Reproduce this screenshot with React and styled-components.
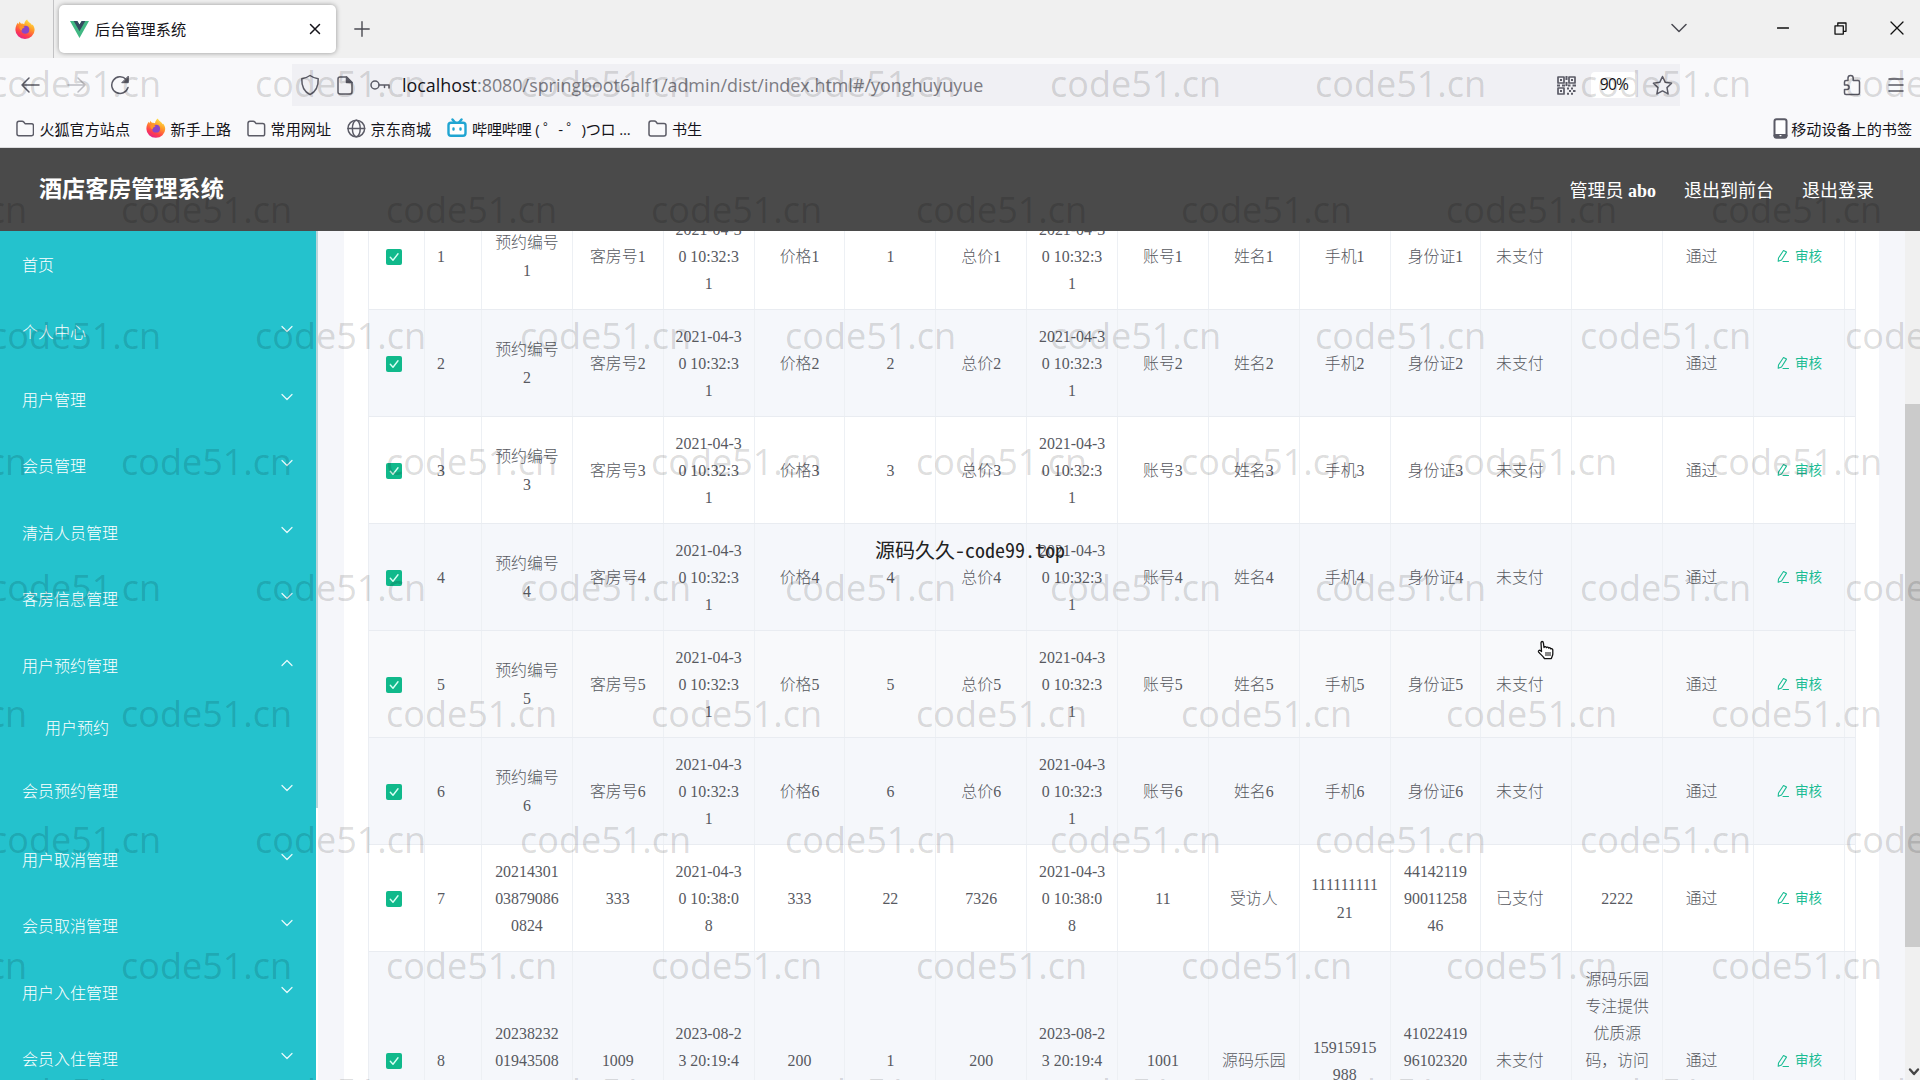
import React from "react";
import styled, { createGlobalStyle } from "styled-components";

const UI = `"Open Sans", "Noto Sans CJK SC", sans-serif`;
const BODY = `"Liberation Serif", "Noto Sans CJK SC", serif`;

const Global = createGlobalStyle`
  * { box-sizing: border-box; }
  body { margin: 0; overflow: hidden; background: #fff; }
`;

const Screen = styled.div`
  position: relative;
  width: 1920px;
  height: 1080px;
  display: flex;
  flex-direction: column;
  overflow: hidden;
  font-family: ${UI};
  color: #15141a;
`;

/* ---------- browser chrome ---------- */
const TabStrip = styled.div`
  height: 58px;
  flex: none;
  display: flex;
  align-items: flex-start;
  background: #f0f0f0;
`;
const PinnedTab = styled.div`
  width: 54px;
  height: 58px;
  padding-left: 15px;
  display: flex;
  align-items: center;
  border-right: 1px solid #c2c2c4;
`;
const Tab = styled.div`
  width: 277px;
  height: 48px;
  margin: 5px 0 0 5px;
  padding: 0 15px 0 11px;
  display: flex;
  align-items: center;
  border-radius: 5px;
  background: #fff;
  box-shadow: 0 0 5px rgba(0, 0, 0, 0.38);
`;
const TabTitle = styled.span`
  flex: 1;
  margin-left: 6px;
  padding-bottom: 2px;
  font-size: 15.2px;
`;
const NewTab = styled.div`
  height: 58px;
  margin-left: 18px;
  display: flex;
  align-items: center;
`;
const WindowControls = styled.div`
  height: 56px;
  margin-left: auto;
  padding-right: 16px;
  display: flex;
  align-items: center;
`;
const Control = styled.div`
  display: flex;
  margin-left: ${(p) => p.$gap || 0}px;
`;

const NavBar = styled.div`
  height: 50px;
  flex: none;
  display: flex;
  align-items: center;
  padding: 4px 16px 0 20px;
  background: #f9f9fb;
`;
const NavButtons = styled.div`
  width: 272px;
  display: flex;
  align-items: center;
`;
const UrlBar = styled.div`
  width: 1388px;
  height: 42px;
  padding: 0 7px 0 8px;
  display: flex;
  align-items: center;
  background: #f0f0f4;
`;
const Url = styled.span`
  flex: 1;
  margin-left: 12px;
  padding-bottom: 1px;
  font-size: 17.9px;
  white-space: nowrap;
  color: #7c7c83;
  b { font-weight: 400; color: #15141a; }
`;
const ZoomBadge = styled.span`
  width: 46px;
  margin: 0 15px 0 15px;
  height: 26px;
  line-height: 24px;
  text-align: center;
  border-radius: 4px;
  background: #fff;
  font-size: 15.6px;
  letter-spacing: -0.7px;
`;
const NavRight = styled.div`
  margin-left: auto;
  display: flex;
  align-items: center;
  gap: 27px;
`;

const Bookmarks = styled.div`
  height: 40px;
  flex: none;
  display: flex;
  align-items: center;
  gap: 16px;
  padding: 1px 8px 0 16px;
  background: #f9f9fb;
  border-bottom: 1px solid #dcdcde;
`;
const Bookmark = styled.div`
  display: flex;
  align-items: center;
  gap: ${(p) => (p.$end ? 3 : 5)}px;
  margin-left: ${(p) => (p.$end ? "auto" : "0")};
  width: ${(p) => (p.$w ? p.$w + "px" : "auto")};
  font-size: 15.1px;
  letter-spacing: ${(p) => p.$track || 0}px;
  white-space: nowrap;
`;

/* ---------- application ---------- */
const Header = styled.header`
  height: 83px;
  flex: none;
  padding: 0 46px 2px 39px;
  display: flex;
  align-items: center;
  background: #4a4a4a;
  color: #fff;
  font-family: ${BODY};
`;
const Title = styled.h1`
  margin: 0 auto 3px 0;
  font-size: 23.1px;
  font-weight: 700;
`;
const HeaderLink = styled.span`
  margin-left: 28px;
  font-size: 18px;
  b { font-weight: 700; }
`;
const Body = styled.div`
  flex: 1;
  min-height: 0;
  display: flex;
  overflow: hidden;
  font-family: ${BODY};
`;
const Sidebar = styled.nav`
  width: 316px;
  flex: none;
  background: #24c2cd;
  color: #fff;
`;
const MenuItem = styled.div`
  height: ${(p) => p.$h || 66.5}px;
  padding: 0 23px 0 ${(p) => (p.$sub ? 45 : 22)}px;
  display: flex;
  align-items: center;
  justify-content: space-between;
  font-size: 16px;
  font-weight: 300;
  svg { margin-top: -4px; }
`;
const SideScroll = styled.div`
  width: 2px;
  height: 577px;
  flex: none;
  background: #b9d5da;
`;
const Main = styled.main`
  flex: 1;
  padding: 0 26px 0 26px;
  background: #f5f6fa;
  overflow: hidden;
`;
const Card = styled.section`
  display: flow-root;
  height: 100%;
  padding: 0 23px 0 24px;
  background: #fff;
`;
const Table = styled.div`
  margin-top: -28px;
  border-left: 1px solid #ebeef3;
  border-right: 1px solid #ebeef3;
  color: #57595f;
  font-size: 15.9px;
  line-height: 27.2px;
`;
const Row = styled.div`
  height: ${(p) => p.$h || 107}px;
  display: grid;
  grid-template-columns: 56px 57px repeat(15, 90.86px) 1fr;
  background: ${(p) => p.$bg};
  border-bottom: 1px solid #e9ecf1;
`;
const Cell = styled.div`
  display: flex;
  align-items: center;
  justify-content: center;
  padding-top: 1px;
  padding-right: ${(p) => p.$shift || 0}px;
  border-right: 1px solid #edf0f4;
  text-align: center;
  white-space: pre;
  font-weight: 300;
  &:last-child { border-right: 0; }
`;
const Check = styled.span`
  width: 16px;
  height: 16px;
  display: flex;
  border-radius: 2px;
  background: #10b98b;
`;
const Audit = styled.span`
  display: flex;
  align-items: center;
  gap: 6px;
  color: #1abc93;
  font-size: 13.5px;
  font-weight: 400;
`;
const PageScroll = styled.div`
  width: 15px;
  flex: none;
  display: flex;
  flex-direction: column;
  justify-content: space-between;
  align-items: flex-end;
  padding-top: 173px;
  background: #f0f0f0;
`;
const Thumb = styled.div`
  width: 15px;
  height: 543px;
  background: #cbcbcb;
`;
const ScrollDown = styled.div`
  display: flex;
  padding-bottom: 3px;
`;

/* ---------- overlays ---------- */
const Watermarks = styled.div`
  position: absolute;
  inset: 0;
  overflow: hidden;
  pointer-events: none;
  color: rgba(0, 0, 0, 0.14);
`;
const MarkRow = styled.div`
  height: 126px;
  display: flex;
  margin-left: ${(p) => p.$x}px;
  font: 36px/126px "Open Sans", sans-serif;
  &:first-child { margin-top: 21px; }
  span { width: 265px; flex: none; }
`;
const CenterMark = styled.div`
  position: absolute;
  left: 875px;
  top: 535px;
  font: 20px/29px "Noto Sans Mono CJK SC", "Noto Sans CJK SC", monospace;
  white-space: pre;
  color: #222;
`;
const Pointer = styled.svg`
  position: absolute;
  left: 1537px;
  top: 640px;
`;

/* ---------- icons ---------- */
const Ico = ({ w = 20, h = w, vb = `0 0 ${w} ${h}`, c = "#5b5b66", s = 1.5, children }) => (
  <svg width={w} height={h} viewBox={vb} fill="none" stroke={c} strokeWidth={s} strokeLinecap="round" strokeLinejoin="round">
    {children}
  </svg>
);
const Firefox = ({ id }) => (
  <svg width="20" height="20" viewBox="0 0 20 20">
    <defs>
      <linearGradient id={id} x1="0.8" y1="0" x2="0.3" y2="1">
        <stop offset="0" stopColor="#fff04a" />
        <stop offset="0.4" stopColor="#ff9a28" />
        <stop offset="0.75" stopColor="#ff3f4d" />
        <stop offset="1" stopColor="#e3208a" />
      </linearGradient>
    </defs>
    <path fill={`url(#${id})`} d="M12.2.4c.2 1.5 1.4 2.300 2.900 3.500.9.7 1.500 1.500 1.900 2.300l.6-.6C18.800 7.200 19.600 9 19.600 11a9.600 8.900 0 0 1-19.200 0C.4 8 1.300 5.600 2.800 3.700l.5 1.500L4.700 2.500c.2 1 .7 1.700 1.500 2.200 1.300-.3 2.300 0 3 .5C9.500 3 10.500 1.300 12.200.4z" />
    <circle cx="10.300" cy="10.700" r="4" fill="#8b45c8" />
    <path fill="#ff9428" d="M4.500 7.200c2-.8 4-.3 5.300.7l-1.600 1.300c-1 .4-1.500 1.200-1 2.200-2.200-.2-3.200-2-2.700-4.200z" />
  </svg>
);
const Vue = () => (
  <svg width="19" height="17" viewBox="0 0 19 17">
    <path fill="#41b883" d="M0 0h7.300l2.200 3.500L11.700 0H19L9.500 17z" />
    <path fill="#35495e" d="M3.700 0h3.600l2.200 3.500L11.700 0h3.600L9.500 10.200z" />
  </svg>
);
const Folder = () => (
  <Ico w={19} h={17}>
    <path d="M1 3.500C1 2 1.700 1 3 1h3.300c.8 0 1.300.3 1.700.8L9.300 3.500H16c1.300 0 2 .8 2 2V14c0 1.300-.7 2-2 2H3c-1.300 0-2-.7-2-2z" />
  </Ico>
);
const Globe = () => (
  <Ico w={19}>
    <circle cx="9.500" cy="9.500" r="8.500" />
    <ellipse cx="9.500" cy="9.500" rx="4" ry="8.500" />
    <path d="M1 9.500h17" />
  </Ico>
);
const Bili = () => (
  <Ico w={20} h={20} c="#20a5d2" s={2.4}>
    <path d="M5.500 1.500L8 4.500M14.500 1.500L12 4.500" />
    <rect x="1.500" y="4.800" width="17" height="13" rx="2.500" fill="#fff" />
    <path d="M6.500 10.500v1M13.500 10.500v1" />
  </Ico>
);
const Phone = () => (
  <Ico w={15} h={21} s={2}>
    <rect x="1.500" y="1.200" width="12" height="18.600" rx="2" fill="#fff" />
    <path d="M2 17.600h11" strokeWidth="3" />
    <path d="M7 17.600h1" stroke="#fff" strokeWidth="1.200" />
  </Ico>
);
const Qr = () => (
  <Ico w={19} s={1.7}>
    <rect x="1" y="1" width="6" height="6" /><rect x="12" y="1" width="6" height="6" /><rect x="1" y="12" width="6" height="6" />
    <path strokeWidth="2" strokeLinecap="butt" d="M3 4h2M14 4h2M3 15h2M9.500 0v4M9.500 6v4M0 9.500h3M5 9.500h3M11 9.500h2.500M15.500 9.500H19M10 12.500h2M14 12.500h2M12 15h2M16 15h2.500M10 17.700h2M14 17.700h2" />
  </Ico>
);
const Chevron = ({ up }) => (
  <Ico w={12} h={8} c="#e9fbfc" s={1.2}>
    <path d={up ? "M1 6.500l5-5 5 5" : "M1 1.500l5 5 5-5"} />
  </Ico>
);

/* ---------- data ---------- */
const menu = [
  { t: "首页", h: 65, leaf: true },
  { t: "个人中心", h: 70 },
  { t: "用户管理", h: 66 },
  { t: "会员管理" },
  { t: "清洁人员管理" },
  { t: "客房信息管理" },
  { t: "用户预约管理", h: 67, open: true },
  { t: "用户预约", sub: true, leaf: true, h: 56 },
  { t: "会员预约管理", h: 71 },
  { t: "用户取消管理" },
  { t: "会员取消管理" },
  { t: "用户入住管理" },
  { t: "会员入住管理" },
];

const stamp = "2021-04-3\n0 10:32:3\n1";
const shades = ["#ffffff", "#f5f7fb", "#ffffff", "#f5f7fb", "#f8f9fb", "#f5f7fb"];
const rows = [
  ...shades.map((bg, i) => {
    const n = i + 1;
    return {
      bg,
      cells: [`${n}`, `预约编号\n${n}`, `客房号${n}`, stamp, `价格${n}`, `${n}`, `总价${n}`, stamp, `账号${n}`, `姓名${n}`, `手机${n}`, `身份证${n}`, "未支付", "", "通过"],
    };
  }),
  {
    bg: "#ffffff",
    cells: ["7", "20214301\n03879086\n0824", "333", "2021-04-3\n0 10:38:0\n8", "333", "22", "7326", "2021-04-3\n0 10:38:0\n8", "11", "受访人", "111111111\n21", "44142119\n90011258\n46", "已支付", "2222", "通过"],
  },
  {
    bg: "#f5f7fb",
    h: 218,
    cells: ["8", "20238232\n01943508\n", "1009", "2023-08-2\n3 20:19:4\n", "200", "1", "200", "2023-08-2\n3 20:19:4\n", "1001", "源码乐园", "15915915\n988", "41022419\n96102320\n", "未支付", "源码乐园\n专注提供\n优质源\n码，访问\n地址：\n\n", "通过"],
  },
];
/* trailing padding of the cells whose text sits left of the middle */
const shifts = { 0: 24, 12: 13, 14: 13 };
/* a cell that continues below the fold keeps its last line as a blank */
const lines = (t) => (t.endsWith("\n") ? t + " " : t);

export default function App() {
  return (
    <Screen>
      <Global />
      <TabStrip>
        <PinnedTab><Firefox id="ffPinned" /></PinnedTab>
        <Tab>
          <Vue />
          <TabTitle>后台管理系统</TabTitle>
          <Ico w={12} c="#15141a"><path d="M1.500 1.500l9 9M10.500 1.500l-9 9" /></Ico>
        </Tab>
        <NewTab><Ico w={16} c="#4a4a52" s={1.4}><path d="M8 .8v14.400M.8 8h14.400" /></Ico></NewTab>
        <WindowControls>
          <Control><Ico w={16} h={10} c="#4a4a52"><path d="M1 1.500l7 7 7-7" /></Ico></Control>
          <Control $gap={90}><Ico w={12} h={4} c="#111" s={1.3}><path d="M.5 2h11" /></Ico></Control>
          <Control $gap={45}>
            <Ico w={13} c="#111" s={1.3}>
              <rect x="1" y="3.800" width="8.300" height="8.300" />
              <path d="M3.800 3.500V1H12v8.300H9.500" />
            </Ico>
          </Control>
          <Control $gap={43}><Ico w={14} c="#111" s={1.3}><path d="M1 1l12 12M13 1L1 13" /></Ico></Control>
        </WindowControls>
      </TabStrip>

      <NavBar>
        <NavButtons>
          <Ico w={20} h={18}><path d="M19 9H2M9 2L2 9l7 7" /></Ico>
          <Control $gap={27}><Ico w={20} h={18} c="#bdbdc3"><path d="M1 9h17M11 2l7 7-7 7" /></Ico></Control>
          <Control $gap={23}>
            <Ico w={20}>
              <path d="M18 12.500A8.300 8.300 0 1 1 16 4.300" />
              <path d="M18.300 1.500v6.200h-6.200z" fill="#5b5b66" strokeWidth="1" />
            </Ico>
          </Control>
        </NavButtons>
        <UrlBar>
          <Ico w={20} h={22}><path d="M10 1.500c2.500 1.800 5 2.700 8.200 3.200.3 7-2.200 12.800-8.200 16-6-3.200-8.500-9-8.200-16C5 4.200 7.500 3.300 10 1.500z" /></Ico>
          <Control $gap={17}>
            <Ico w={16} h={19}>
              <path d="M3 1h6.500L15 6.500V16c0 1.300-.7 2-2 2H3c-1.300 0-2-.7-2-2V3c0-1.300.7-2 2-2z" />
              <path d="M9.500 1v5.500H15z" fill="#5b5b66" />
            </Ico>
          </Control>
          <Control $gap={17}>
            <Ico w={20} h={12}><circle cx="5" cy="6" r="4" /><path d="M9 6h10v3M14.500 6v2.500" /></Ico>
          </Control>
          <Url><b>localhost</b>:8080/springboot6alf1/admin/dist/index.html#/yonghuyuyue</Url>
          <Qr />
          <ZoomBadge>90%</ZoomBadge>
          <Ico w={21} h={21}><path d="M10.500 1.500l2.800 5.800 6.300.9-4.600 4.400 1.100 6.300-5.600-3-5.600 3L6 12.600 1.400 8.200l6.300-.9z" /></Ico>
        </UrlBar>
        <NavRight>
          <Ico w={19} h={22}>
            <path d="M6 6.500V4a2.600 2.600 0 0 1 5.200 0v2.500H16c1 0 1.500.5 1.500 1.500v11c0 1-.5 1.500-1.500 1.500H4c-1 0-1.500-.5-1.500-1.500v-3.500h2.300a2.300 2.300 0 0 0 0-4.600H2.500V8c0-1 .5-1.500 1.500-1.500z" />
          </Ico>
          <Ico w={16} h={14}><path d="M1 1h14M1 7h14M1 13h14" /></Ico>
        </NavRight>
      </NavBar>

      <Bookmarks>
        <Bookmark $w={114}><Folder />火狐官方站点</Bookmark>
        <Bookmark $w={85}><Firefox id="ffMark" />新手上路</Bookmark>
        <Bookmark $w={84}><Folder />常用网址</Bookmark>
        <Bookmark $w={84}><Globe />京东商城</Bookmark>
        <Bookmark $w={185} $track={-0.2}><Bili />哔哩哔哩 ( ゜- ゜)つロ ...</Bookmark>
        <Bookmark><Folder />书生</Bookmark>
        <Bookmark $end><Phone />移动设备上的书签</Bookmark>
      </Bookmarks>

      <Header>
        <Title>酒店客房管理系统</Title>
        <HeaderLink>管理员 <b>abo</b></HeaderLink>
        <HeaderLink>退出到前台</HeaderLink>
        <HeaderLink>退出登录</HeaderLink>
      </Header>

      <Body>
        <Sidebar>
          {menu.map((m) => (
            <MenuItem key={m.t} $h={m.h} $sub={m.sub}>
              {m.t}
              {!m.leaf && <Chevron up={m.open} />}
            </MenuItem>
          ))}
        </Sidebar>
        <SideScroll />
        <Main>
          <Card>
            <Table>
              {rows.map((r, i) => (
                <Row key={i} $bg={r.bg} $h={r.h}>
                  <Cell $shift={5}>
                    <Check><Ico w={16} c="#d9fff4" s={1.4}><path d="M4.300 8.300l2.700 3 5-6.500" /></Ico></Check>
                  </Cell>
                  {r.cells.map((c, j) => (
                    <Cell key={j} $shift={shifts[j]}>{lines(c)}</Cell>
                  ))}
                  <Cell>
                    <Audit>
                      <Ico w={13} h={14} c="#1abc93" s={1.1}><path d="M7.500 1.500l3 1.600L5.500 11l-3.300 1.300.3-3.300zM7 12.500h5.500" /></Ico>
                      审核
                    </Audit>
                  </Cell>
                  <Cell />
                </Row>
              ))}
            </Table>
          </Card>
        </Main>
        <PageScroll>
          <Thumb />
          <ScrollDown><Ico w={12} h={10} c="#444" s={2.4}><path d="M2 2.500l4 4.500 4-4.500" /></Ico></ScrollDown>
        </PageScroll>
      </Body>

      <Watermarks>
        {Array.from({ length: 9 }, (_, r) => (
          <MarkRow key={r} $x={r % 2 ? -144 : -10}>
            {Array.from({ length: 8 }, (_, c) => <span key={c}>code51.cn</span>)}
          </MarkRow>
        ))}
      </Watermarks>
      <CenterMark>源码久久-code99.top</CenterMark>
      <Pointer width="18" height="20" viewBox="0 0 18 20" fill="#fff" stroke="#111" strokeWidth="1.300" strokeLinejoin="round">
        <path d="M4.500 11.500L4 3c0-2 2.200-2 2.400 0l.6 4.500c.3-1.300 2.200-1.200 2.400.2.500-1 2.100-.8 2.300.5.600-.8 2-.5 2.100.7.800-.5 2 0 2 1.200v4c0 1.500-1 2.500-1.500 4.500H7.500C6.500 16.500 3 14 1.500 11.800c-.5-1.200 1-2 1.800-1.200z" />
        <path d="M9 12v4M11 12v4M13 12v4" strokeWidth="1" />
      </Pointer>
    </Screen>
  );
}
